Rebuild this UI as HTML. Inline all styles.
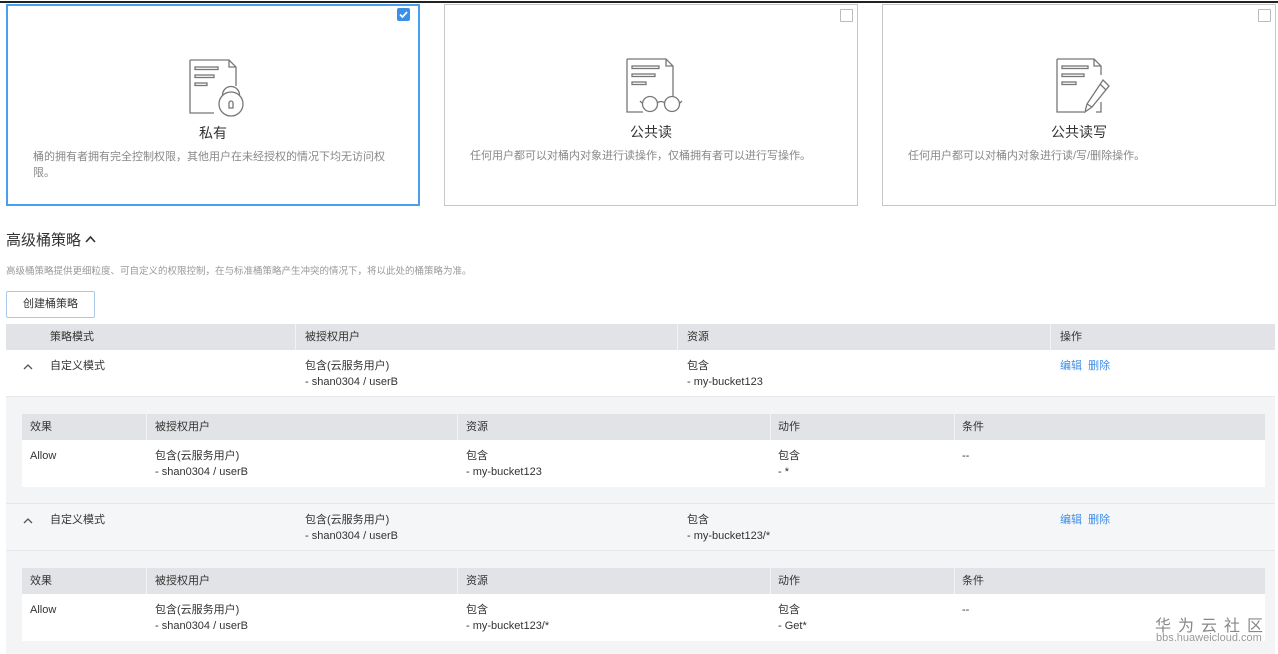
<!DOCTYPE html>
<html><head><meta charset="utf-8"><style>
*{margin:0;padding:0;box-sizing:border-box}
body{width:1278px;height:654px;overflow:hidden;background:#fff;font-family:"Liberation Sans","Noto Sans CJK SC",sans-serif;color:#333;position:relative}
.a{position:absolute}
.card{position:absolute;top:4px;height:202px;border:1px solid #c8c8c8;background:#fff}
.card.sel{border:2px solid #4a9eef}
.ct{position:absolute;top:117px;left:0;right:0;text-align:center;font-size:14px;color:#333}
.cd{position:absolute;top:143px;font-size:11px;color:#888;line-height:16px}
.cb{position:absolute;top:4px;right:4px;width:13px;height:13px;border:1px solid #bbb;background:#fff;border-radius:1px}
.t{position:absolute;font-size:11px;color:#333;line-height:16px}
.hd{position:absolute;background:#e2e3e6}
.sep{position:absolute;width:1px;background:#f3f3f3}
.lnk{color:#3e8ee8}
</style></head><body>
<div class="a" style="left:0;top:1px;width:1278px;height:2px;background:#222"></div>

<div class="card sel" style="left:6px;width:414px">
<svg class="a" style="left:181px;top:52px" width="58" height="60" viewBox="0 0 58 60" fill="none" stroke="#777" stroke-width="1.3"><path d="M1 2H40L47 9V28M1 2V55H25"/><path d="M40 2V9H47"/><rect x="6" y="9" width="23" height="2.5"/><rect x="6" y="17" width="19" height="2.5"/><rect x="6" y="25" width="12" height="2.5"/><circle cx="42" cy="37" r="8.5"/><circle cx="42" cy="46" r="12" fill="#fff"/><path d="M40 50V45A2 2 0 1 1 44 45V50Z"/></svg>
<div class="ct">私有</div>
<div class="cd" style="left:25px;width:370px">桶的拥有者拥有完全控制权限，其他用户在未经授权的情况下均无访问权限。</div>
<div class="a" style="top:2px;right:8px;width:13px;height:13px;background:#3c8fe6;border-radius:2px"><svg width="13" height="13" viewBox="0 0 13 13"><path d="M3 6.5L5.5 9L10 4" stroke="#fff" stroke-width="1.8" fill="none"/></svg></div>
</div>

<div class="card" style="left:444px;width:414px">
<svg class="a" style="left:181px;top:52px" width="60" height="58" viewBox="0 0 60 58" fill="none" stroke="#777" stroke-width="1.3"><path d="M1 2H40L47 9V40M1 2V55H17"/><path d="M40 2V9H47"/><rect x="6" y="9" width="27" height="2.5"/><rect x="6" y="17" width="23" height="2.5"/><rect x="6" y="25" width="14" height="2.5"/><circle cx="24" cy="47" r="7.5" fill="#fff"/><circle cx="46" cy="47" r="7.5" fill="#fff"/><path d="M31 46Q35 43 39 46M16 46L14 44M54 46L56 44"/></svg>
<div class="ct">公共读</div>
<div class="cd" style="left:25px;width:370px">任何用户都可以对桶内对象进行读操作，仅桶拥有者可以进行写操作。</div>
<div class="cb"></div>
</div>

<div class="card" style="left:882px;width:394px">
<svg class="a" style="left:173px;top:52px" width="56" height="58" viewBox="0 0 56 58" fill="none" stroke="#777" stroke-width="1.3"><path d="M1 2H38L45 9V18M1 2V55H28M45 45V55H40"/><path d="M38 2V9H45"/><rect x="6" y="9" width="26" height="2.5"/><rect x="6" y="17" width="22" height="2.5"/><rect x="6" y="25" width="14" height="2.5"/><path d="M47 23L53 29L36 50L29 55L31 47Z" fill="#fff"/><path d="M44 27L50 33M31 47L36 50"/></svg>
<div class="ct">公共读写</div>
<div class="cd" style="left:25px;width:360px">任何用户都可以对桶内对象进行读/写/删除操作。</div>
<div class="cb"></div>
</div>

<div class="a" style="left:6px;top:229px;font-size:15px;color:#333">高级桶策略 <svg width="11" height="8" viewBox="0 0 11 8" style="vertical-align:2px"><path d="M1 7L5.5 2L10 7" stroke="#333" stroke-width="1.6" fill="none"/></svg></div>
<div class="a" style="left:6px;top:263px;font-size:9.5px;color:#999">高级桶策略提供更细粒度、可自定义的权限控制，在与标准桶策略产生冲突的情况下，将以此处的桶策略为准。</div>
<div class="a" style="left:6px;top:291px;width:89px;height:27px;border:1px solid #aac8e8;border-radius:2px;font-size:11px;line-height:25px;text-align:center;color:#333">创建桶策略</div>

<div class="hd" style="left:6px;top:324px;width:1269px;height:26px"></div>
<div class="sep" style="left:295px;top:324px;height:26px"></div>
<div class="sep" style="left:677px;top:324px;height:26px"></div>
<div class="sep" style="left:1050px;top:324px;height:26px"></div>
<div class="t" style="left:50px;top:329px">策略模式</div>
<div class="t" style="left:305px;top:329px">被授权用户</div>
<div class="t" style="left:687px;top:329px">资源</div>
<div class="t" style="left:1060px;top:329px">操作</div>

<div class="a" style="left:6px;top:396px;width:1269px;height:107px;background:#f3f4f6;border-top:1px solid #e6e7ea"></div>
<svg class="a" style="left:23px;top:363px" width="10" height="7"><path d="M1 6L5 2L9 6" stroke="#555" stroke-width="1.3" fill="none"/></svg>
<div class="t" style="left:50px;top:358px">自定义模式</div>
<div class="t" style="left:305px;top:358px">包含(云服务用户)<br>- shan0304 / userB</div>
<div class="t" style="left:687px;top:358px">包含<br>- my-bucket123</div>
<div class="t lnk" style="left:1060px;top:358px">编辑&nbsp;&nbsp;删除</div>

<div class="hd" style="left:22px;top:414px;width:1243px;height:26px"></div>
<div class="a" style="left:22px;top:440px;width:1243px;height:47px;background:#fff"></div>
<div class="sep" style="left:146px;top:414px;height:26px"></div><div class="sep" style="left:457px;top:414px;height:26px"></div><div class="sep" style="left:770px;top:414px;height:26px"></div><div class="sep" style="left:954px;top:414px;height:26px"></div>
<div class="t" style="left:30px;top:419px">效果</div><div class="t" style="left:155px;top:419px">被授权用户</div><div class="t" style="left:466px;top:419px">资源</div><div class="t" style="left:778px;top:419px">动作</div><div class="t" style="left:962px;top:419px">条件</div>
<div class="t" style="left:30px;top:448px">Allow</div><div class="t" style="left:155px;top:448px">包含(云服务用户)<br>- shan0304 / userB</div><div class="t" style="left:466px;top:448px">包含<br>- my-bucket123</div><div class="t" style="left:778px;top:448px">包含<br>- *</div><div class="t" style="left:962px;top:448px">--</div>

<div class="a" style="left:6px;top:503px;width:1269px;height:48px;background:#f5f6f8;border-top:1px solid #e6e7ea;border-bottom:1px solid #e6e7ea"></div>
<div class="a" style="left:6px;top:551px;width:1269px;height:103px;background:#f3f4f6"></div>
<svg class="a" style="left:23px;top:517px" width="10" height="7"><path d="M1 6L5 2L9 6" stroke="#555" stroke-width="1.3" fill="none"/></svg>
<div class="t" style="left:50px;top:512px">自定义模式</div>
<div class="t" style="left:305px;top:512px">包含(云服务用户)<br>- shan0304 / userB</div>
<div class="t" style="left:687px;top:512px">包含<br>- my-bucket123/*</div>
<div class="t lnk" style="left:1060px;top:512px">编辑&nbsp;&nbsp;删除</div>

<div class="hd" style="left:22px;top:568px;width:1243px;height:26px"></div>
<div class="a" style="left:22px;top:594px;width:1243px;height:47px;background:#fff"></div>
<div class="sep" style="left:146px;top:568px;height:26px"></div><div class="sep" style="left:457px;top:568px;height:26px"></div><div class="sep" style="left:770px;top:568px;height:26px"></div><div class="sep" style="left:954px;top:568px;height:26px"></div>
<div class="t" style="left:30px;top:573px">效果</div><div class="t" style="left:155px;top:573px">被授权用户</div><div class="t" style="left:466px;top:573px">资源</div><div class="t" style="left:778px;top:573px">动作</div><div class="t" style="left:962px;top:573px">条件</div>
<div class="t" style="left:30px;top:602px">Allow</div><div class="t" style="left:155px;top:602px">包含(云服务用户)<br>- shan0304 / userB</div><div class="t" style="left:466px;top:602px">包含<br>- my-bucket123/*</div><div class="t" style="left:778px;top:602px">包含<br>- Get*</div><div class="t" style="left:962px;top:602px">--</div>

<div class="a" style="left:1155px;top:612px;font-size:16px;color:#888;letter-spacing:7px">华为云社区</div>
<div class="a" style="left:1156px;top:632px;font-size:11px;color:#999">bbs.huaweicloud.com</div>
</body></html>
